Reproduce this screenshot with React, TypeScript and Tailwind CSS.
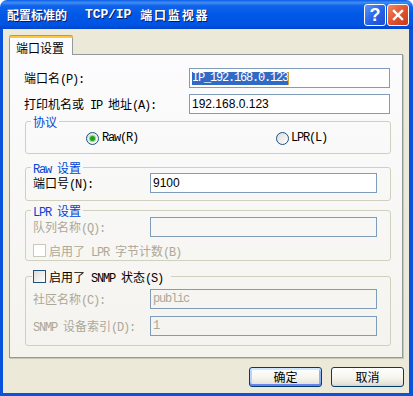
import type { ReactNode } from "react";

// SimSun-like metrics: CJK 12px wide, Latin runs half-width (6px) in a thin serif mono.
const CJK = "font-['Noto_Sans_CJK_SC',sans-serif] text-[12px]";
const LAT = "font-['Liberation_Mono',monospace] text-[12px] tracking-[-1.2px]";
const SANS = "font-['Liberation_Sans',sans-serif] text-[12px]";

function Txt({ s }: { s: string }) {
  const parts = s.split(/([\x00-\xff]+)/).filter(Boolean);
  return (
    <>
      {parts.map((p, i) =>
        /^[\x00-\xff]+$/.test(p) ? (
          <span key={i} className={"inline-block leading-[12px] whitespace-pre " + LAT}>
            {p}
          </span>
        ) : (
          <span key={i} className={"inline-block leading-[12px] " + CJK}>
            {p}
          </span>
        )
      )}
    </>
  );
}

function Box({ w, children, disabled }: { w: string; children?: ReactNode; disabled?: boolean }) {
  return (
    <div
      className={
        "h-[20px] border border-[#7F9DB9] flex items-center pl-[2px] overflow-hidden " +
        (disabled ? "bg-transparent text-[#ACA899] " : "bg-white text-black ") +
        w
      }
    >
      {children}
    </div>
  );
}

function Check({ disabled }: { disabled?: boolean }) {
  return (
    <span
      className={
        disabled
          ? "block w-[13px] h-[13px] shrink-0 border border-[#CAC8BB] bg-white"
          : "block w-[13px] h-[13px] shrink-0 border border-[#1C5180] bg-linear-to-br from-[#DCDCD7] to-white"
      }
    />
  );
}

function Radio({ checked }: { checked?: boolean }) {
  return (
    <span className="flex w-[13px] h-[13px] shrink-0 items-center justify-center rounded-full border border-[#1C5180] bg-linear-to-br from-[#DCDCD7] to-white">
      {checked && (
        <span className="block w-[5px] h-[5px] rounded-full bg-[#21A121] shadow-[0_0_0_1px_#8EDB8A]" />
      )}
    </span>
  );
}

function Btn({ label, def }: { label: string; def?: boolean }) {
  return (
    <button
      className={
        "w-[73px] h-[20px] rounded-[3px] border border-[#003C74] flex items-center justify-center text-black bg-[linear-gradient(180deg,#FFFFFF_0%,#F5F4EE_55%,#E6E3D8_88%,#D6D0C5_100%)] " +
        (def
          ? "shadow-[inset_0_2px_0_#CEE7FF,inset_0_-2px_0_#6982EE,inset_2px_0_0_#B8D0FB,inset_-2px_0_0_#8FAFF6]"
          : "")
      }
    >
      <span className={CJK}>{label}</span>
    </button>
  );
}

export default function App() {
  return (
    <div className="w-[413px] h-[396px] flex flex-col bg-white leading-[14px] text-black">
      {/* title bar */}
      <div className="h-[29px] shrink-0 rounded-t-[7px] flex items-center pl-[7px] pr-[4px] text-white font-bold [text-shadow:1px_1px_0_#0A1864] bg-[linear-gradient(180deg,#0A5FE9_0%,#3F8CF3_9%,#1064EB_20%,#0058E6_50%,#0054E3_85%,#0044CC_100%)]">
        <span className={CJK + " font-bold"}>配置标准的</span>
        <span className="ml-[18px] font-['Liberation_Mono',monospace] text-[13px] font-bold tracking-[-0.1px]">
          TCP/IP
        </span>
        <span className={CJK + " ml-[9px] font-bold tracking-[1.8px]"}>端口监视器</span>
        <div className="ml-auto flex gap-[1px]">
          <div className="w-[22px] h-[22px] rounded-[3px] border border-white flex items-center justify-center bg-[linear-gradient(135deg,#5E95F8_0%,#2A64E8_50%,#1A4CD2_100%)] [text-shadow:none]">
            <span className="font-['Liberation_Sans',sans-serif] text-[18px] font-bold leading-none">?</span>
          </div>
          <div className="w-[22px] h-[22px] rounded-[3px] border border-white flex items-center justify-center bg-[linear-gradient(135deg,#F08A66_0%,#E05530_50%,#C63A18_100%)]">
            <svg width="12" height="12" viewBox="0 0 12 12">
              <path d="M2 2 L10 10 M10 2 L2 10" stroke="white" strokeWidth="2.4" strokeLinecap="square" />
            </svg>
          </div>
        </div>
      </div>

      {/* client area */}
      <div className="flex-1 flex flex-col bg-[#ECE9D8] border-l-[3px] border-r-[4px] border-b-[3px] border-[#0852DC]">
        <div className="pl-[6px] pt-[6px] flex">
          <div className="relative z-10 -mb-[1px] w-[64px] h-[20px] rounded-t-[3px] border-x border-[#919B9C] bg-[#FCFCFE] flex flex-col">
            <div className="h-[3px] rounded-t-[3px] bg-[#FFC83C] border-t border-[#E68B2C] -mx-[1px]" />
            <div className="pl-[6px] pt-[2px]">
              <Txt s="端口设置" />
            </div>
          </div>
        </div>

        <div className="ml-[6px] mr-[6px] h-[304px] border border-[#919B9C] shadow-[1px_1px_0_#C9C6B8] bg-[linear-gradient(180deg,#FCFCFE,#F4F3EE)] pl-[14px] flex flex-col">
          <div className="mt-[13px] flex items-center h-[20px]">
            <div className="w-[165px]">
              <Txt s="端口名(P):" />
            </div>
            <Box w="w-[201px]">
              <span className={"bg-[#316AC5] text-white leading-[13px] " + LAT}>IP_192.168.0.123</span>
              <span className="block w-[1px] h-[13px] bg-[#D49A3A]" />
            </Box>
          </div>
          <div className="mt-[6px] flex items-center h-[20px]">
            <div className="w-[165px]">
              <Txt s="打印机名或 IP 地址(A):" />
            </div>
            <Box w="w-[201px]">
              <span className={SANS}>192.168.0.123</span>
            </Box>
          </div>

          {/* 协议 */}
          <fieldset className="mt-[1px] ml-[1px] w-[366px] rounded-[3px] border border-[#D0D0BF] px-[7px] pb-[4px]">
            <legend className="-ml-[2px] px-[2px] h-[12px] leading-[12px] text-[#0046D5]">
              <Txt s="协议" />
            </legend>
            <div className="h-[22px] flex items-center">
              <div className="ml-[53px] w-[190px] flex items-center gap-[3px]">
                <Radio checked />
                <Txt s="Raw(R)" />
              </div>
              <div className="flex items-center gap-[2px]">
                <Radio />
                <Txt s="LPR(L)" />
              </div>
            </div>
          </fieldset>

          {/* Raw 设置 */}
          <fieldset className="mt-[7px] ml-[1px] w-[366px] rounded-[3px] border border-[#D0D0BF] px-[7px] pb-[7px]">
            <legend className="-ml-[2px] px-[2px] h-[12px] leading-[12px] text-[#0046D5]">
              <Txt s="Raw 设置" />
            </legend>
            <div className="flex items-center h-[20px]">
              <div className="w-[117px] leading-[12px]">
                <Txt s="端口号(N):" />
              </div>
              <Box w="w-[227px]">
                <span className={SANS}>9100</span>
              </Box>
            </div>
          </fieldset>

          {/* LPR 设置 */}
          <fieldset className="mt-[3px] ml-[1px] w-[366px] rounded-[3px] border border-[#D0D0BF] px-[7px] pb-[3px] text-[#ACA899]">
            <legend className="-ml-[2px] px-[2px] h-[12px] leading-[12px] text-[#0046D5]">
              <Txt s="LPR 设置" />
            </legend>
            <div className="mt-[1px] flex items-center h-[20px]">
              <div className="w-[117px] leading-[12px]">
                <Txt s="队列名称(Q):" />
              </div>
              <Box w="w-[227px]" disabled />
            </div>
            <div className="mt-[7px] h-[13px] flex items-center gap-[3px]">
              <Check disabled />
              <span>
                <Txt s="启用了 LPR 字节计数(B)" />
              </span>
            </div>
          </fieldset>

          {/* SNMP */}
          <fieldset className="mt-[9px] ml-[1px] w-[366px] rounded-[3px] border border-[#D0D0BF] px-[7px] pb-[9px] text-[#ACA899]">
            <legend className="-ml-[1px] pl-[1px] pr-[8px] text-black">
              <span className="flex items-center h-[13px] gap-[3px]">
                <Check />
                <span>
                  <Txt s="启用了 SNMP 状态(S)" />
                </span>
              </span>
            </legend>
            <div className="mt-[6px] flex items-center h-[20px]">
              <div className="w-[117px]">
                <Txt s="社区名称(C):" />
              </div>
              <Box w="w-[227px]" disabled>
                <span className={LAT}>public</span>
              </Box>
            </div>
            <div className="mt-[7px] flex items-center h-[20px]">
              <div className="w-[117px]">
                <Txt s="SNMP 设备索引(D):" />
              </div>
              <Box w="w-[227px]" disabled>
                <span className={LAT}>1</span>
              </Box>
            </div>
          </fieldset>
        </div>

        <div className="mt-[9px] mr-[5px] flex justify-end gap-[9px]">
          <Btn label="确定" def />
          <Btn label="取消" />
        </div>
      </div>
    </div>
  );
}
